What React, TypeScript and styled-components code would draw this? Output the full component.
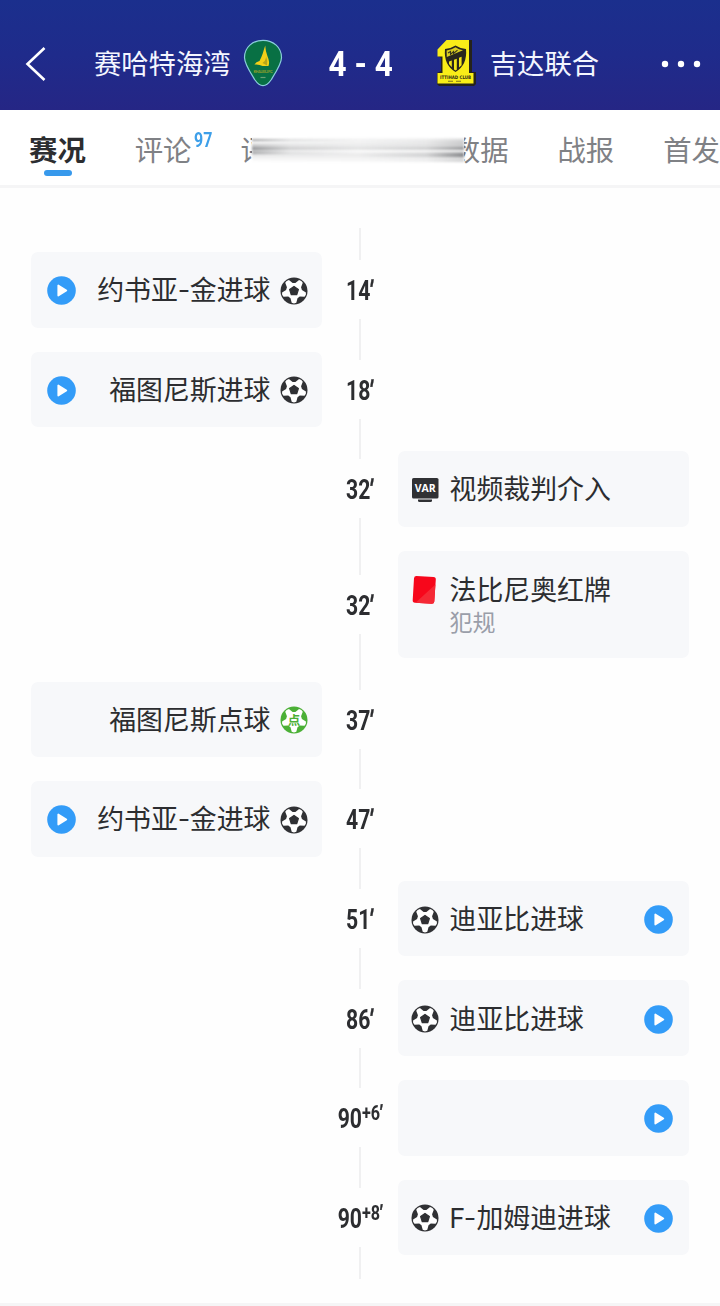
import React from 'react';
import styled, { createGlobalStyle } from 'styled-components';

const GlobalStyle = createGlobalStyle`
  * { box-sizing: border-box; }
  html, body { margin: 0; padding: 0; background: #fefefe; }
  body {
    font-family: Roboto, 'Noto Sans CJK SC', sans-serif;
    color: #2c2d30;
    overflow: hidden;
  }
  svg { display: block; flex: none; overflow: visible; }
`;

const Page = styled.div`
  width: 720px;
  height: 1306px;
  display: flex;
  flex-direction: column;
  overflow: hidden;
`;

const Header = styled.header`
  height: 110px;
  flex: none;
  padding: 17px 18px 0 25px;
  display: flex;
  align-items: center;
  color: #f4f6ff;
  background: linear-gradient(#1b2f8d, #1f2b8b 50%, #252685);
`;

const Team = styled.span`
  font-size: 27.3px;
  line-height: 40px;
  padding-top: 2px;
  white-space: nowrap;
  font-weight: 400;
`;

const HomeSide = styled.div`
  margin-left: 47px;
  width: 189px;
  display: flex;
  align-items: center;
  justify-content: space-between;
`;

const Score = styled.div`
  width: 152px;
  padding: 2px 0 0 3px;
  display: flex;
  justify-content: center;
  font: 700 35px/40px Roboto, sans-serif;
  color: #fff;
`;

const ScoreText = styled.span`
  transform: scaleX(0.9);
`;

const AwaySide = styled.div`
  width: 164px;
  display: flex;
  align-items: center;
  justify-content: space-between;
`;

const MoreIcon = styled.svg`
  margin-left: auto;
`;

const Tabs = styled.nav`
  position: relative;
  height: 78px;
  flex: none;
  display: flex;
  padding: 20px 0 0 29px;
  gap: 48.700px;
  background: #fff;
  border-bottom: 3px solid #f5f5f6;
`;

const Tab = styled.div<{ $active?: boolean }>`
  position: relative;
  width: 57px;
  flex: none;
  font-size: 28.400px;
  line-height: 44px;
  white-space: nowrap;
  color: ${(p) => (p.$active ? '#2c2d30' : '#7f8185')};
  font-weight: ${(p) => (p.$active ? 700 : 400)};
`;

const ActiveMark = styled.i`
  display: block;
  width: 28px;
  height: 6px;
  margin: -4px auto 0;
  border-radius: 3px;
  background: #3799ec;
`;

const Count = styled.span`
  position: absolute;
  left: 59px;
  top: -2px;
  font: 700 21px/24px Roboto, sans-serif;
  color: #3d9fe9;
  transform: scaleX(0.76);
  transform-origin: left;
`;

const Smear = styled.div`
  position: absolute;
  left: 252px;
  top: 22px;
  width: 212px;
  height: 36px;
  padding-top: 6px;
  background: #fff;
`;

const SmearBands = styled.div`
  filter: blur(0.9px);
`;

const SmearBand = styled.div<{ $h: number; $l: number; $m: number; $r: number }>`
  height: ${(p) => p.$h}px;
  background: linear-gradient(
    90deg,
    rgba(70, 72, 76, ${(p) => p.$l}),
    rgba(70, 72, 76, ${(p) => (p.$l + p.$m * 3) / 4}) 18%,
    rgba(70, 72, 76, ${(p) => p.$m}) 50%,
    rgba(70, 72, 76, ${(p) => (p.$r + p.$m * 3) / 4}) 82%,
    rgba(70, 72, 76, ${(p) => p.$r})
  );
`;

const Timeline = styled.main`
  flex: 1;
  padding: 40px 31px 0;
`;

const Rail = styled.div`
  width: 2px;
  height: 12px;
  margin: 0 auto;
  background: #f0f0f1;
`;

const Row = styled.div<{ $tall?: boolean }>`
  height: ${(p) => (p.$tall ? 130.8 : 99.6)}px;
  display: grid;
  grid-template-columns: 291px 76px 291px;
`;

const Center = styled.div`
  grid-column: 2;
  grid-row: 1;
  display: flex;
  flex-direction: column;
  align-items: center;
`;

const Segment = styled.i`
  flex: 1;
  width: 2px;
  background: #f0f0f1;
`;

const Minute = styled.div`
  height: 59px;
  padding-top: 3px;
  display: flex;
  justify-content: center;
  align-items: center;
  font: 700 27.5px/30px Roboto, sans-serif;
  transform: scaleX(0.77);
  white-space: nowrap;
`;

const Extra = styled.span`
  font-size: 21px;
  line-height: 20px;
  margin-bottom: 12px;
`;

const Prime = styled.span`
  display: inline-block;
  margin: 0 1px 0 -1.500px;
  -webkit-text-stroke: 0.500px #2c2d30;
  transform: skewX(-10deg);
`;

const Card = styled.div<{ $side: 'home' | 'away' }>`
  grid-column: ${(p) => (p.$side === 'home' ? 1 : 3)};
  grid-row: 1;
  margin: 12px 0;
  padding: 2px ${(p) => (p.$side === 'home' ? '14px 0 16px' : '16px 0 13px')};
  display: flex;
  align-items: center;
  flex-direction: ${(p) => (p.$side === 'home' ? 'row-reverse' : 'row')};
  gap: ${(p) => (p.$side === 'home' ? 9.5 : 10.5)}px;
  border-radius: 7px;
  background: #f7f8fa;
`;

const Title = styled.div`
  font-size: 26.9px;
  line-height: 38px;
  white-space: nowrap;
  display: flex;
`;

const Dash = styled.span`
  width: 12px;
  display: flex;
  justify-content: center;
  transform: translateY(-1px) scaleX(1.35);
`;

const Note = styled.div`
  font-size: 23px;
  line-height: 30px;
  margin-top: -1px;
  color: #9a9ea9;
`;

const TallIcon = styled.span`
  align-self: flex-start;
  padding-top: 22px;
`;

const Texts = styled.div`
  display: flex;
  flex-direction: column;
  padding-top: 1px;
`;

const PlaySlot = styled.span<{ $side: 'home' | 'away' }>`
  margin-${(p) => (p.$side === 'home' ? 'right' : 'left')}: auto;
`;

const Footer = styled.div`
  height: 3px;
  flex: none;
  background: #f5f5f6;
`;

const Play = () => (
  <svg width="29" height="29" viewBox="0 0 29 29">
    <circle cx="14.5" cy="14.5" r="14.3" fill="#339cf8" />
    <path d="M11.3 9.500v10l8-5z" fill="#fff" stroke="#fff" strokeWidth="1.800" strokeLinejoin="round" />
  </svg>
);

const polar = (radius: number, degrees: number) => {
  const a = (degrees * Math.PI) / 180;
  return `${(14 + radius * Math.sin(a)).toFixed(2)},${(14 - radius * Math.cos(a)).toFixed(2)}`;
};

const STEPS = [0, 72, 144, 216, 288];
const STAR = STEPS.map((a) => [polar(8, a - 10), polar(8, a + 10), polar(12, a + 25), polar(12.5, a + 36), polar(12, a + 47)].join(' ')).join(' ');
const PENTAGON = STEPS.map((a) => polar(4.6, a)).join(' ');

const Ball = ({ penalty }: { penalty?: boolean }) => {
  const c = penalty ? '#4bb036' : '#303134';
  return (
    <svg width="28" height="28" viewBox="0 0 28 28">
      <circle cx="14" cy="14" r="13.500" fill={c} />
      <polygon points={STAR} fill="#fff" />
      {penalty ? (
        <text x="14" y="18.500" textAnchor="middle" fontSize="12.500" fontWeight="700" fontFamily="'Noto Sans CJK SC', sans-serif" fill={c}>
          点
        </text>
      ) : (
        <polygon points={PENTAGON} fill={c} stroke={c} strokeWidth="1.200" strokeLinejoin="round" />
      )}
    </svg>
  );
};

const Var = () => (
  <svg width="28" height="26" viewBox="0 0 28 26">
    <rect x="1" y="1" width="26.500" height="20.500" rx="1.600" fill="#303134" />
    <path d="M7 22.600h14v1q0 1.500-1.500 1.500h-11Q7 25.100 7 23.600z" fill="#303134" />
    <text x="14.300" y="14.800" textAnchor="middle" fontSize="10.400" fontWeight="700" fontFamily="'Open Sans', sans-serif" textLength="21" lengthAdjust="spacingAndGlyphs" fill="#fff">
      VAR
    </text>
  </svg>
);

const RedCard = () => (
  <svg width="28" height="30" viewBox="0 0 28 30">
    <path d="M5.500 1L22.500 2Q25 2.200 24.800 4.600L23.300 26.500Q23 29 20.500 28.800L4 27.800Q1.500 27.600 1.700 25.200L3 3.200Q3.300 .9 5.500 1z" fill="#f7071b" />
    <path d="M24.400 9.500L23.300 26.500Q23 29 20.500 28.800L4.500 27.800z" fill="#f52935" />
  </svg>
);

const HomeCrest = () => (
  <svg width="40" height="48" viewBox="0 1 40 48">
    <path d="M20 1.300C9.500 1.300 1.500 8.500 1.500 18.500C1.500 25 7 33 12 41C14.700 45 17 46.600 20 46.600S25.300 45 28 41C33 33 38.500 25 38.500 18.500C38.500 8.500 30.500 1.300 20 1.300z" fill="#087044" stroke="#8bcddd" strokeWidth="1.200" />
    <path d="M22.200 6.500C20.500 12 19 17.500 16.500 22Q13 22.500 11.500 25.500Q16 25 19.500 27H25.500Q27 23 24.400 17Q22.600 12.500 22.200 6.500z" fill="#f2cf18" />
    <path d="M19.500 24Q22.500 22 23.300 18Q25 22.500 24 26.500z" fill="#b6a51b" />
    <text x="20" y="34" textAnchor="middle" fontSize="4" fontWeight="700" fontFamily="Roboto, sans-serif" textLength="19" fill="#8e9d2c">KHALEEJ FC</text>
    <path d="M17.500 38.500h5" stroke="#6ba176" strokeWidth="1.200" />
  </svg>
);

const AwayCrest = () => (
  <svg width="42" height="49" viewBox="0 1 42 49">
    <path d="M13 2H37V34H41V46L39 48H4L2 46V35L6 33V20L3 18V12z" fill="#25231b" />
    <path d="M11.500 2H34V35H38.500V45.500H2.500V35H7.500V18.500H2.500V11.500z" fill="#f9ed18" />
    <path d="M10 11Q16 10.500 20.500 7.500Q25 10.500 31 11Q32.500 27 20.500 34Q8.500 27 10 11z" fill="#28261c" />
    <path d="M11.600 12.500Q17 11.500 20.500 9.200Q24 11.500 28 12.200L11.800 19z" fill="#d9cd22" />
    <path d="M13 15l2.500-1.500v3l3-3v2l4-3.300" fill="none" stroke="#38351d" strokeWidth="1.100" />
    <path d="M14 23.500l2.800-1v6.700L14 26zM19 21.700l2.800-1v11l-1.300.8-1.500-1zM24 19.800l2.600-1v8.400L24 29.600z" fill="#f1e51a" />
    <text x="20.500" y="40.500" textAnchor="middle" fontSize="4.800" fontWeight="700" fontFamily="'DejaVu Sans', sans-serif" textLength="31" lengthAdjust="spacingAndGlyphs" fill="#302e18">ITTIHAD CLUB</text>
    <path d="M13 43.300h5m3 0h5" stroke="#77701d" strokeWidth="1.100" />
  </svg>
);

type Kind = 'goal' | 'penalty' | 'var' | 'red';
type MatchEvent = {
  side: 'home' | 'away';
  minute: string;
  extra?: string;
  title?: string;
  note?: string;
  kind?: Kind;
  play?: boolean;
};

const events: MatchEvent[] = [
  { side: 'home', minute: '14', title: '约书亚-金进球', kind: 'goal', play: true },
  { side: 'home', minute: '18', title: '福图尼斯进球', kind: 'goal', play: true },
  { side: 'away', minute: '32', title: '视频裁判介入', kind: 'var' },
  { side: 'away', minute: '32', title: '法比尼奥红牌', note: '犯规', kind: 'red' },
  { side: 'home', minute: '37', title: '福图尼斯点球', kind: 'penalty' },
  { side: 'home', minute: '47', title: '约书亚-金进球', kind: 'goal', play: true },
  { side: 'away', minute: '51', title: '迪亚比进球', kind: 'goal', play: true },
  { side: 'away', minute: '86', title: '迪亚比进球', kind: 'goal', play: true },
  { side: 'away', minute: '90', extra: '+6', play: true },
  { side: 'away', minute: '90', extra: '+8', title: 'F-加姆迪进球', kind: 'goal', play: true },
];

const EventIcon = ({ kind }: { kind: Kind }) => {
  if (kind === 'var') return <Var />;
  if (kind === 'red') return <TallIcon><RedCard /></TallIcon>;
  return <Ball penalty={kind === 'penalty'} />;
};

const TitleText = ({ text }: { text: string }) => {
  const [head, tail] = text.split('-');
  return (
    <Title>
      <span>{head}</span>
      {tail && <Dash>-</Dash>}
      {tail && <span>{tail}</span>}
    </Title>
  );
};

const EventRow = ({ event }: { event: MatchEvent }) => (
  <Row $tall={!!event.note}>
    <Center>
      <Segment />
      <Minute>
        {event.minute}
        {event.extra ? <Extra>{event.extra}<Prime>′</Prime></Extra> : <Prime>′</Prime>}
      </Minute>
      <Segment />
    </Center>
    <Card $side={event.side}>
      {event.kind && <EventIcon kind={event.kind} />}
      <Texts>
        {event.title && <TitleText text={event.title} />}
        {event.note && <Note>{event.note}</Note>}
      </Texts>
      {event.play && <PlaySlot $side={event.side}><Play /></PlaySlot>}
    </Card>
  </Row>
);

export default function App() {
  return (
    <Page>
      <GlobalStyle />
      <Header>
        <svg width="22" height="36" viewBox="0 0 22 36">
          <path d="M19.500 2L2.500 18L19.500 34" fill="none" stroke="#fff" strokeWidth="2.600" />
        </svg>
        <HomeSide>
          <Team>赛哈特海湾</Team>
          <HomeCrest />
        </HomeSide>
        <Score><ScoreText>4 - 4</ScoreText></Score>
        <AwaySide>
          <AwayCrest />
          <Team>吉达联合</Team>
        </AwaySide>
        <MoreIcon width="42" height="8" viewBox="0 0 42 8">
          <g fill="#fff">
            <circle cx="5" cy="4" r="3.200" />
            <circle cx="21" cy="4" r="3.200" />
            <circle cx="37" cy="4" r="3.200" />
          </g>
        </MoreIcon>
      </Header>
      <Tabs>
        <Tab $active>赛况<ActiveMark /></Tab>
        <Tab>评论<Count>97</Count></Tab>
        <Tab>评</Tab>
        <Tab />
        <Tab>数据</Tab>
        <Tab>战报</Tab>
        <Tab>首发</Tab>
        <Smear>
          <SmearBands>
            <SmearBand $h={1} $l={0} $m={0.03} $r={0.1} />
            <SmearBand $h={2} $l={0.5} $m={0.06} $r={0.2} />
            <SmearBand $h={3} $l={0.06} $m={0.07} $r={0.28} />
            <SmearBand $h={3} $l={0.3} $m={0.1} $r={0.3} />
            <SmearBand $h={3} $l={0.55} $m={0.15} $r={0.55} />
            <SmearBand $h={2} $l={0.3} $m={0.01} $r={0.03} />
            <SmearBand $h={2} $l={0.5} $m={0.08} $r={0.5} />
            <SmearBand $h={3} $l={0.12} $m={0.1} $r={0.65} />
            <SmearBand $h={3} $l={0.06} $m={0.06} $r={0.2} />
            <SmearBand $h={2} $l={0.01} $m={0.03} $r={0.25} />
          </SmearBands>
        </Smear>
      </Tabs>
      <Timeline>
        <Rail />
        {events.map((event, i) => (
          <EventRow key={i} event={event} />
        ))}
        <Rail />
      </Timeline>
      <Footer />
    </Page>
  );
}
